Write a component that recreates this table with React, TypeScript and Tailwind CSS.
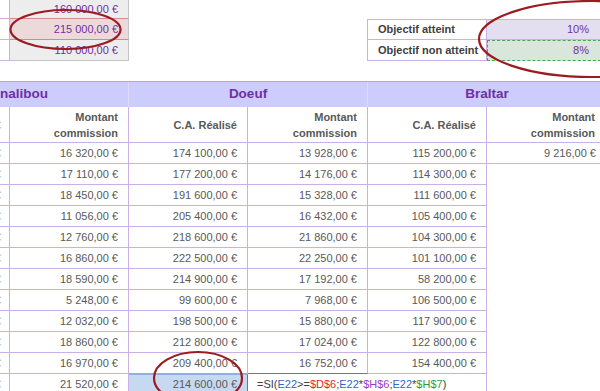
import clsx from 'clsx'

const rows = [
  ['16 320,00 €', '174 100,00 €', '13 928,00 €', '115 200,00 €', '9 216,00 €'],
  ['17 110,00 €', '177 200,00 €', '14 176,00 €', '114 300,00 €', ''],
  ['18 450,00 €', '191 600,00 €', '15 328,00 €', '111 600,00 €', ''],
  ['11 056,00 €', '205 400,00 €', '16 432,00 €', '105 400,00 €', ''],
  ['12 760,00 €', '218 600,00 €', '21 860,00 €', '104 300,00 €', ''],
  ['16 860,00 €', '222 500,00 €', '22 250,00 €', '101 100,00 €', ''],
  ['18 590,00 €', '214 900,00 €', '17 192,00 €', '58 200,00 €', ''],
  ['5 248,00 €', '99 600,00 €', '7 968,00 €', '106 500,00 €', ''],
  ['12 032,00 €', '198 500,00 €', '15 880,00 €', '117 900,00 €', ''],
  ['18 860,00 €', '212 800,00 €', '17 024,00 €', '122 800,00 €', ''],
  ['16 970,00 €', '209 400,00 €', '16 752,00 €', '154 400,00 €', ''],
  ['21 520,00 €', '214 600,00 €', '', '', ''],
]

const line = 'border-[#c9b0e6]'

const Stub = () => (
  <div className={clsx('w-[10px] shrink-0 h-full flex items-center overflow-hidden border-r border-b', line)}>
    <span className="-ml-[5px] text-[#a9bdd3]">€</span>
  </div>
)

const Formula = () => (
  <span className="whitespace-nowrap text-[#404040]">
    =SI(<span className="text-[#3566c8]">E22</span>&gt;=<span className="text-[#e0262b]">$D$6</span>;
    <span className="text-[#3566c8]">E22</span>*<span className="text-[#9b3cc4]">$H$6</span>;
    <span className="text-[#3566c8]">E22</span>*<span className="text-[#2f9a3a]">$H$7</span>)
  </span>
)

const App = () => {
  return (
    <div className="relative w-[600px] h-[391px] overflow-hidden bg-white font-['Liberation_Sans',Arial,sans-serif] text-[11px] text-[#595959]">
      <div className="flex flex-col w-max">
        {/* Top area: seuils + taux */}
        <div className="flex h-[19px]">
          <div className={clsx('w-[10px] border-r border-b', line)} />
          <div className="w-[119px] flex items-center justify-end pr-[10px] bg-[#ededed] border-r border-r-[#c4c4c4] border-b border-b-[#d88a8a] text-[#7030a0]">
            160 000,00 €
          </div>
        </div>
        <div className="flex h-[21px]">
          <div className={clsx('w-[10px] border-r border-b', line)} />
          <div className="w-[119px] flex items-center justify-end pr-[10px] bg-[#ecdadb] border-r border-r-[#c4c4c4] border-b border-b-[#d88a8a] text-[#7030a0]">
            215 000,00 €
          </div>
          <div className="w-[238px]" />
          <div className={clsx('w-[120px] flex items-center pl-[10px] border font-bold text-[#404040]', line)}>
            Objectif atteint
          </div>
          <div className={clsx('w-[119px] flex items-center justify-end pr-[16px] bg-[#e4dff0] border-y border-r text-[#7030a0]', line)}>
            10%
          </div>
        </div>
        <div className="flex h-[21px]">
          <div className={clsx('w-[10px] border-r border-b', line)} />
          <div className="w-[119px] flex items-center justify-end pr-[10px] bg-[#ededed] border-r border-r-[#c4c4c4] border-b border-b-[#c4c4c4] text-[#7030a0]">
            110 000,00 €
          </div>
          <div className="w-[238px]" />
          <div className={clsx('w-[120px] flex items-center pl-[10px] border-x border-b font-bold text-[#404040]', line)}>
            Objectif non atteint
          </div>
          <div className="w-[119px] flex items-center justify-end pr-[16px] bg-[#d9e6db] border border-dashed border-[#4ea35a] text-[#7030a0]">
            8%
          </div>
        </div>
        <div className="h-[20px]" />

        {/* Commercial names */}
        <div className="flex h-[26px] bg-[#ccccff] border-t border-[#b7a2dd] text-[13.5px] font-bold text-[#7030a0]">
          <div className="w-[129px] flex items-center border-r border-[#ded9ff]">nalibou</div>
          <div className="w-[239px] flex items-center justify-center border-r border-[#ded9ff]">Doeuf</div>
          <div className="w-[238px] flex items-center justify-center">Braltar</div>
        </div>

        {/* Column titles */}
        <div className="flex h-[36px] font-bold leading-[16px]">
          <Stub />
          {['Montant commission', 'C.A. Réalisé', 'Montant commission', 'C.A. Réalisé', 'Montant commission'].map((t, i) => (
            <div
              key={i}
              className={clsx(
                'flex items-center justify-end text-right pr-[10px] border-r border-b',
                line,
                i === 2 ? 'w-[120px]' : 'w-[119px]',
              )}
            >
              {t.startsWith('Montant') ? (
                <span>
                  Montant
                  <br />
                  commission
                </span>
              ) : (
                t
              )}
            </div>
          ))}
        </div>

        {/* Data */}
        {rows.map((r, i) => {
          const last = i === rows.length - 1
          return (
            <div key={i} className="flex h-[21px]">
              <Stub />
              <div className={clsx('w-[119px] flex items-center justify-end pr-[10px] border-r border-b', line)}>{r[0]}</div>
              <div
                className={clsx(
                  'w-[119px] flex items-center justify-end pr-[10px] border-r border-b',
                  last ? 'bg-[#c6d9f1] border-r-[#3f9b4c] border-b-[#8fb1df] border-t border-t-[#8fb1df]' : line,
                  i === rows.length - 2 && 'border-b-[#8fb1df]',
                )}
              >
                {r[1]}
              </div>
              <div
                className={clsx(
                  'w-[120px] flex items-center',
                  last ? 'pl-[9px] overflow-visible' : clsx('justify-end pr-[10px] border-r border-b', line),
                  i === rows.length - 2 && 'border-b-[#3f9b4c]',
                )}
              >
                {last ? <Formula /> : r[2]}
              </div>
              <div className={clsx('w-[119px] flex items-center justify-end pr-[10px] border-r', line, !last && 'border-b')}>{r[3]}</div>
              <div className={clsx('w-[119px] flex items-center justify-end pr-[10px]', i === 0 && clsx('border-b', line))}>{r[4]}</div>
            </div>
          )
        })}
      </div>

      {/* Annotations */}
      <svg className="absolute inset-0 pointer-events-none" width="600" height="391" viewBox="0 0 600 391" fill="none">
        <ellipse cx="65.5" cy="29.5" rx="55" ry="19.5" stroke="#9b1b20" strokeWidth="2.2" />
        <ellipse cx="592" cy="39" rx="113" ry="38" stroke="#9b1b20" strokeWidth="2.2" />
        <ellipse cx="198" cy="378" rx="44" ry="26" stroke="#9b1b20" strokeWidth="2.2" />
      </svg>
    </div>
  )
}

export default App
